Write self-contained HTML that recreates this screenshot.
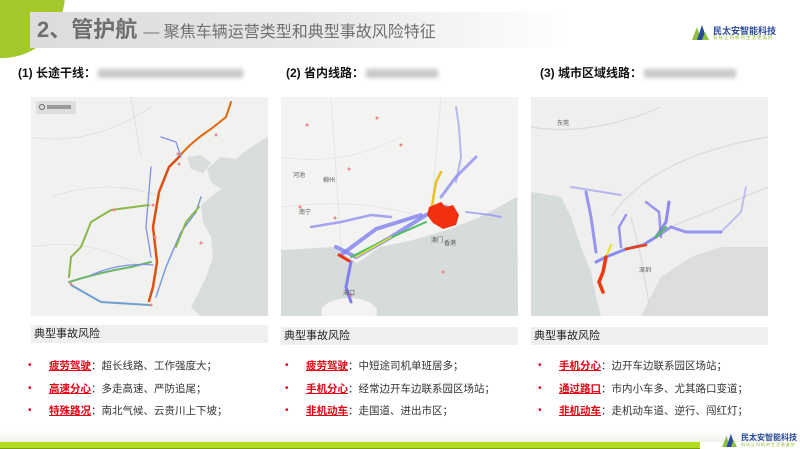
<!DOCTYPE html>
<html><head><meta charset="utf-8"><style>
*{margin:0;padding:0;box-sizing:border-box}
body{width:800px;height:449px;overflow:hidden;background:#fff;position:relative;font-family:"Liberation Sans","Noto Sans CJK SC",sans-serif;color:#333}
.abs{position:absolute}
.circle{left:-60px;top:-70px;width:125px;height:128px;border-radius:50%;background:#a2c82a}
.bar{left:30px;top:12px;width:540px;height:36px;background:linear-gradient(90deg,#dcdcdc 0%,#e6e6e6 50%,#fff 100%)}
.title{left:37px;top:14px;font-size:22px;font-weight:bold;color:#6e6e6e;white-space:nowrap;line-height:32px}
.title span{font-size:16px;font-weight:normal;color:#707070}
.sub{top:64px;font-size:12px;font-weight:bold;color:#111;white-space:nowrap}
.blur{display:inline-block;height:9px;background:#c8c8c8;filter:blur(2px);vertical-align:middle;margin-left:2px}
.map{top:97px;width:237px;height:219px;overflow:hidden}
.hd{height:18px;background:#efefef;font-size:11px;color:#222;padding-left:3px;line-height:18px}
.list{font-size:10.5px;line-height:22.5px;color:#333;white-space:nowrap}
.list div{position:relative;padding-left:21px}
.list div:before{content:"•";color:#e60012;position:absolute;left:0;font-size:10px}
.r{color:#e60012;font-weight:bold;text-decoration:underline}
.logo-t{font-size:9px;font-weight:bold;color:#2a4a9a;white-space:nowrap}
.logo-s{font-size:4.5px;color:#8ab82a;white-space:nowrap;letter-spacing:1px}
</style></head><body>
<div class="abs circle"></div>
<div class="abs bar"></div>
<div class="abs title">2、管护航 <span>— 聚焦车辆运营类型和典型事故风险特征</span></div>

<svg class="abs" style="left:692px;top:24px" width="18" height="16" viewBox="0 0 18 16"><polygon points="0,16 5,3 9,16" fill="#8dc03c"/><polygon points="5,16 10,1 15,16" fill="#2a4a9a"/><polygon points="10,16 13,8 17,16" fill="#8dc03c"/></svg>
<div class="abs logo-t" style="left:713px;top:24px">民太安智能科技</div>
<div class="abs logo-s" style="left:713px;top:35px">科技让司机的生活更美好</div>

<div class="abs sub" style="left:18px">(1) 长途干线：<span class="blur" style="width:145px"></span></div>
<div class="abs sub" style="left:286px">(2) 省内线路：<span class="blur" style="width:72px"></span></div>
<div class="abs sub" style="left:540px">(3) 城市区域线路：<span class="blur" style="width:92px"></span></div>

<!-- map 1 -->
<div class="abs map" style="left:31px;background:#f1f1ef">
<svg width="237" height="219" viewBox="0 0 237 219">
<path d="M237,40 L220,50 L205,62 L190,60 L176,72 L180,85 L190,92 L180,100 L170,108 L172,125 L180,140 L182,160 L176,178 L168,195 L160,210 L170,219 L237,219Z" fill="#d8dcdc"/>
<path d="M156,60 L170,58 L180,66 L172,76 L160,72Z" fill="#d8dcdc"/>
<g fill="none" stroke="#ddd" stroke-width="0.8"><path d="M0,40 Q60,50 120,10"/><path d="M20,100 Q80,80 130,100"/><path d="M0,150 Q60,140 110,170"/><path d="M100,0 L110,60"/></g>
<rect x="5" y="4" width="40" height="13" rx="2" fill="#ddd"/><circle cx="11" cy="10" r="2.5" fill="none" stroke="#666"/><rect x="16" y="8" width="24" height="4" fill="#999"/>
<g fill="none" stroke-linecap="round">
<path d="M148,60 Q160,45 180,32 L195,20 L200,5" stroke="#e06a10" stroke-width="2"/>
<path d="M148,60 L138,70 L128,95 L122,130 L126,165 L122,190 L118,204" stroke="#dd5010" stroke-width="2.5"/>
<path d="M120,70 L115,130 L120,160" stroke="#8090ee" stroke-width="1.3"/>
<path d="M130,40 L145,45 L150,60" stroke="#8090ee" stroke-width="1.2"/>
<path d="M118,108 L80,113 L60,125 L50,150 L40,160 L38,180" stroke="#8ab84a" stroke-width="2"/>
<path d="M38,185 Q70,175 100,170 L120,165" stroke="#6cb46a" stroke-width="2"/>
<path d="M40,188 L70,205 L118,208" stroke="#70a0d0" stroke-width="2"/>
<path d="M125,200 L135,170 L150,135 L165,115 L170,100" stroke="#7a9ae0" stroke-width="1.5"/>
<path d="M145,150 L155,125 L168,110" stroke="#8ab84a" stroke-width="1.8"/>
<path d="M60,178 Q90,165 122,168" stroke="#8090ee" stroke-width="1.2"/>
</g>
<g fill="#e88" ><circle cx="147" cy="57" r="1.5"/><circle cx="148" cy="67" r="1.5"/><circle cx="122" cy="108" r="1.5"/><circle cx="83" cy="113" r="1.5"/><circle cx="124" cy="140" r="1.5"/><circle cx="40" cy="187" r="1.5"/><circle cx="120" cy="208" r="1.5"/><circle cx="185" cy="38" r="1.5"/><circle cx="170" cy="146" r="1.5"/></g>
</svg></div>

<!-- map 2 -->
<div class="abs map" style="left:281px;background:#f3f3f1">
<svg width="237" height="219" viewBox="0 0 237 219">
<path d="M0,153 L52,150 L76,166 L99,150 L132,143 L166,133 L199,120 L236,100 L237,219 L0,219Z" fill="#d6dbdb"/>
<ellipse cx="68" cy="215" rx="28" ry="14" fill="#f3f3f1"/>
<g fill="none" stroke="#e2e2e2" stroke-width="0.8"><path d="M0,60 Q60,70 120,40"/><path d="M50,0 L60,150"/><path d="M160,0 L150,120"/><path d="M0,110 Q80,100 140,120"/></g>
<g fill="none" stroke-linecap="round">
<path d="M55,150 L75,160 L110,140 L145,118 L165,110" stroke="#8080f0" stroke-width="4" opacity=".8"/>
<path d="M60,158 L95,132 L140,118" stroke="#8080f0" stroke-width="4" opacity=".8"/>
<path d="M70,160 L100,145 L145,125" stroke="#4cc060" stroke-width="2"/>
<path d="M58,158 L70,165" stroke="#ee3010" stroke-width="3"/>
<path d="M70,165 L65,190 L70,205" stroke="#8080f0" stroke-width="3"/>
<path d="M150,115 L155,85 L160,75" stroke="#e8c020" stroke-width="2.5"/>
<path d="M160,100 L175,80 L185,70 L195,60" stroke="#8080f0" stroke-width="3" opacity=".7"/>
<path d="M175,85 L180,60 L178,30 L175,10" stroke="#9090f0" stroke-width="2" opacity=".6"/>
<path d="M185,115 L210,118 L220,120" stroke="#8080f0" stroke-width="2" opacity=".6"/>
<path d="M30,130 L60,125 L90,118 L110,120" stroke="#8080f0" stroke-width="2.5" opacity=".7"/>
<path d="M75,160 L110,140" stroke="#e8e020" stroke-width="1.5"/>
</g>
<path d="M148,110 L160,105 L165,110 L172,108 L178,118 L175,128 L162,132 L152,126 L146,118Z" fill="#f03010"/>
<g fill="#e88"><circle cx="26" cy="28" r="1.5"/><circle cx="96" cy="21" r="1.5"/><circle cx="68" cy="72" r="1.5"/><circle cx="19" cy="110" r="1.5"/><circle cx="54" cy="121" r="1.5"/><circle cx="162" cy="175" r="1.5"/><circle cx="70" cy="198" r="1.5"/><circle cx="120" cy="48" r="1.5"/></g>
<g font-size="6" fill="#555"><text x="18" y="117">南宁</text><text x="150" y="145">澳门</text><text x="163" y="148">香港</text><text x="62" y="198">海口</text><text x="12" y="80">河池</text><text x="42" y="85">柳州</text></g>
</svg></div>

<!-- map 3 -->
<div class="abs map" style="left:531px;background:#efefed">
<svg width="237" height="219" viewBox="0 0 237 219">
<path d="M0,95 L30,100 L40,120 L50,150 L60,175 L65,200 L70,219 L0,219Z" fill="#d6dbdb"/>
<path d="M110,219 L130,180 L160,160 L190,150 L237,150 L237,219Z" fill="#dcdedd"/>
<g fill="none" stroke="#dadada" stroke-width="1.2"><path d="M0,30 Q60,40 130,10"/><path d="M80,120 Q120,60 237,40"/><path d="M120,219 L110,160 L100,120"/><path d="M140,130 L237,90"/></g>
<g fill="none" stroke-linecap="round">
<path d="M55,95 L60,120 L65,155" stroke="#7070f0" stroke-width="3" opacity=".7"/>
<path d="M40,90 L90,98" stroke="#8080f0" stroke-width="2" opacity=".5"/>
<path d="M65,165 L75,160 L95,152 L112,148 L125,140 L135,125 L138,105" stroke="#7070f0" stroke-width="3" opacity=".8"/>
<path d="M75,160 L80,148" stroke="#e8e020" stroke-width="2"/>
<path d="M95,152 L115,148" stroke="#e84010" stroke-width="2.5"/>
<path d="M125,140 L140,130 L155,135 L190,135" stroke="#7070f0" stroke-width="3" opacity=".7"/>
<path d="M130,140 L128,115 L115,105" stroke="#7070f0" stroke-width="2.5" opacity=".7"/>
<path d="M90,150 L88,130 L95,118" stroke="#7070f0" stroke-width="2.5" opacity=".7"/>
<path d="M190,135 L210,115 L215,90" stroke="#9090f0" stroke-width="2" opacity=".5"/>
<path d="M75,160 L72,175 L68,185 L72,195" stroke="#ee3810" stroke-width="3.5"/>
<path d="M125,140 L135,130" stroke="#50c050" stroke-width="2"/>
</g>
<g font-size="6" fill="#555"><text x="26" y="28">东莞</text><text x="108" y="175">深圳</text></g>
</svg></div>

<!-- headers -->
<div class="abs hd" style="left:31px;top:325px;width:237px">典型事故风险</div>
<div class="abs hd" style="left:281px;top:327px;width:237px">典型事故风险</div>
<div class="abs hd" style="left:531px;top:327px;width:237px">典型事故风险</div>

<div class="abs list" style="left:28px;top:355px">
<div><span class="r">疲劳驾驶</span>：超长线路、工作强度大；</div>
<div><span class="r">高速分心</span>：多走高速、严防追尾；</div>
<div><span class="r">特殊路况</span>：南北气候、云贵川上下坡；</div>
</div>
<div class="abs list" style="left:285px;top:355px">
<div><span class="r">疲劳驾驶</span>：中短途司机单班居多；</div>
<div><span class="r">手机分心</span>：经常边开车边联系园区场站；</div>
<div><span class="r">非机动车</span>：走国道、进出市区；</div>
</div>
<div class="abs list" style="left:538px;top:355px">
<div><span class="r">手机分心</span>：边开车边联系园区场站；</div>
<div><span class="r">通过路口</span>：市内小车多、尤其路口变道；</div>
<div><span class="r">非机动车</span>：走机动车道、逆行、闯红灯；</div>
</div>

<div class="abs" style="left:0;top:430px;width:800px;height:12px;background:linear-gradient(#fff,#f2f2ee)"></div>
<div class="abs" style="left:0;top:442px;width:700px;height:7px;background:#b4dc22;border-bottom:1px solid #7ea018"></div>
<svg class="abs" style="left:722px;top:433px" width="16" height="14" viewBox="0 0 18 16"><polygon points="0,16 5,3 9,16" fill="#8dc03c"/><polygon points="5,16 10,1 15,16" fill="#2a4a9a"/><polygon points="10,16 13,8 17,16" fill="#8dc03c"/></svg>
<div class="abs logo-t" style="left:741px;top:432px;font-size:8px">民太安智能科技</div>
<div class="abs logo-s" style="left:741px;top:442px;font-size:4px">科技让司机的生活更美好</div>
</body></html>
